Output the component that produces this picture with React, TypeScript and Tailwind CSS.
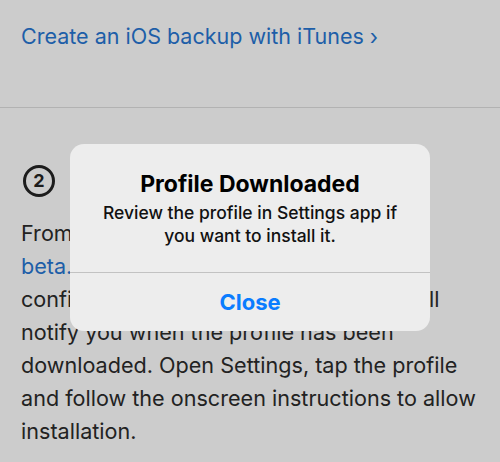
import React from 'react';

const font = { fontFamily: 'Inter, "Noto Sans", sans-serif' };

const CircledTwo: React.FC = () => (
  <div className="ml-[2px] flex h-[32px] w-[32px] items-center justify-center rounded-full border-[3px] border-[#1c1c1c] text-[18px] font-bold leading-none text-[#1c1c1c]">
    2
  </div>
);

const ProfileAlert: React.FC = () => (
  <div className="absolute left-[70px] top-[144px] flex h-[187px] w-[360px] flex-col rounded-[14px] bg-[#ededed]">
    <div className="flex flex-col items-center px-2 pt-[26px] text-center">
      <h2 className="text-[23px] font-bold leading-[28px] text-black">Profile Downloaded</h2>
      <p className="mt-[3px] text-[17.5px] font-medium leading-[23px] text-[#111]">
        Review the profile in Settings app if
        <br />
        you want to install it.
      </p>
    </div>
    <div className="mt-auto h-px bg-[#c2c2c2]" />
    <button className="flex h-[58px] items-center justify-center text-[22px] font-bold text-[#0a7cff]">
      Close
    </button>
  </div>
);

export default function App() {
  return (
    <div className="relative h-[462px] w-[500px] overflow-hidden bg-[#cccccc]" style={font}>
      <div className="px-[21px] pt-[20px]">
        <a className="text-[21.5px] leading-[33px] text-[#1d5ea8]">Create an iOS backup with iTunes ›</a>
      </div>
      <div className="mt-[54px] h-px bg-[#b2b2b2]" />
      <div className="px-[21px] pt-[57px]">
        <CircledTwo />
        <p className="mt-[20px] text-[21.6px] leading-[33px] text-[#222222]">
          From your iOS device, go to
          <br />
          <span className="text-[#1d5ea8]">beta.apple.com/profile</span> to download
          <br />
          configuration profile. The Beta pages will
          <br />
          notify you when the profile has been
          <br />
          downloaded. Open Settings, tap the profile
          <br />
          and follow the onscreen instructions to allow
          <br />
          installation.
        </p>
      </div>
      <ProfileAlert />
    </div>
  );
}
